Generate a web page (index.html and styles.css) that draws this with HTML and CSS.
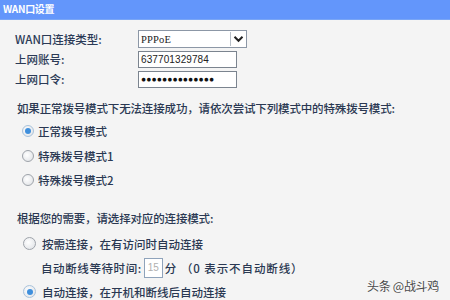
FILE: index.html
```html
<!DOCTYPE html>
<html>
<head>
<meta charset="utf-8">
<link rel="stylesheet" href="styles.css">
</head>
<body>
<div class="page">
  <div class="header">WAN口设置</div>
  <div class="form">
    <div class="row">
      <span class="label">WAN口连接类型:</span>
      <div class="select">
        <span class="select-value">PPPoE</span>
        <span class="select-btn">
          <svg width="11" height="8" viewBox="0 0 11 8"><path d="M1.5 1.8 L5.5 5.8 L9.5 1.8" fill="none" stroke="#222" stroke-width="2"/></svg>
        </span>
      </div>
    </div>
    <div class="row">
      <span class="label">上网账号:</span>
      <div class="input">637701329784</div>
    </div>
    <div class="row">
      <span class="label">上网口令:</span>
      <div class="input pwd">●●●●●●●●●●●●●●</div>
    </div>
  </div>

  <p class="note">如果正常拨号模式下无法连接成功，请依次尝试下列模式中的特殊拨号模式:</p>
  <div class="group one">
    <div class="opt"><span class="radio on"></span><span>正常拨号模式</span></div>
    <div class="opt"><span class="radio"></span><span>特殊拨号模式1</span></div>
    <div class="opt"><span class="radio"></span><span>特殊拨号模式2</span></div>
  </div>

  <p class="note second">根据您的需要，请选择对应的连接模式:</p>
  <div class="group two">
    <div class="opt"><span class="radio big"></span><span>按需连接，在有访问时自动连接</span></div>
    <div class="sub"><span>自动断线等待时间:</span><span class="small-input">15</span><span>分</span><span class="hint">（0 表示不自动断线）</span></div>
    <div class="opt"><span class="radio big on"></span><span>自动连接，在开机和断线后自动连接</span></div>
  </div>

  <div class="watermark">头条 @战斗鸡</div>
</div>
</body>
</html>
```

FILE: styles.css
```css
html, body {
  margin: 0;
  padding: 0;
}
body {
  width: 450px;
  height: 300px;
  overflow: hidden;
  background: #f4f4f4;
  font-family: "Noto Sans CJK SC", "Noto Sans", sans-serif;
  font-size: 11.5px;
  color: #2a3852;
}
.page {
  position: relative;
  width: 450px;
  height: 300px;
}
.header {
  height: 19px;
  line-height: 17px;
  background: #6396fb;
  border-bottom: 1px solid #7aa6f5;
  color: #ffffff;
  font-size: 10px;
  font-weight: bold;
  padding-left: 3px;
  letter-spacing: -0.3px;
}
.form {
  margin-top: 10px;
  padding-left: 15px;
  display: flex;
  flex-direction: column;
  gap: 2px;
}
.row {
  display: flex;
  align-items: center;
  height: 18px;
}
.label {
  width: 123px;
  font-weight: 500;
  color: #2b3a56;
}
.select {
  width: 107px;
  height: 16px;
  border: 1px solid #8c97a6;
  background: #fff;
  display: flex;
  align-items: center;
  justify-content: space-between;
}
.select-value, .input, .small-input {
  font-family: "Liberation Serif", "DejaVu Serif", serif;
  font-size: 10.5px;
  color: #222;
}
.select-value {
  padding-left: 2px;
  letter-spacing: 0.2px;
}
.select-btn {
  width: 14px;
  height: 14px;
  margin-right: 1px;
  border-left: 1px solid #b8bfc8;
  display: flex;
  align-items: center;
  justify-content: center;
}
.input {
  width: 95px;
  height: 15px;
  line-height: 15px;
  border: 1px solid #7b848f;
  background: #fff;
  padding-left: 2px;
  font-family: "Liberation Sans", sans-serif;
  font-size: 10px;
  letter-spacing: 0.1px;
  overflow: hidden;
  white-space: nowrap;
}
.input.pwd {
  font-size: 8.5px;
  letter-spacing: 0.1px;
  color: #111;
}
.note {
  margin: 12px 0 3px 17px;
  line-height: 16px;
  font-weight: 500;
  letter-spacing: -0.15px;
}
.note.second {
  margin-top: 17px;
  margin-bottom: 6px;
}
.group {
  display: flex;
  flex-direction: column;
}
.group.one {
  padding-left: 22px;
}
.group.one .opt {
  height: 24.5px;
}
.group.two {
  padding-left: 23px;
}
.opt {
  display: flex;
  align-items: center;
  height: 24px;
  font-weight: 500;
  letter-spacing: 0;
}
.radio {
  width: 10px;
  height: 10px;
  border-radius: 50%;
  border: 1px solid #9ea3aa;
  background: radial-gradient(circle at 40% 40%, #ffffff, #dcdfe3);
  margin-right: 4px;
  flex: none;
  position: relative;
}
.radio.big {
  width: 11px;
  height: 11px;
  margin-right: 6px;
}
.radio.on {
  border-color: #a9c3dc;
}
.radio.on::after {
  content: "";
  position: absolute;
  left: 2px;
  top: 2px;
  width: 6px;
  height: 6px;
  border-radius: 50%;
  background: #3f8fdc;
}
.radio.big.on::after {
  left: 2.5px;
  top: 2.5px;
}
.sub {
  display: flex;
  align-items: center;
  height: 24px;
  padding-left: 18px;
  font-weight: 500;
  letter-spacing: 0.6px;
}
.small-input {
  width: 17px;
  height: 18px;
  line-height: 18px;
  border: 1px solid #8fa3bb;
  background: #fff;
  color: #b0b0b0;
  text-align: center;
  margin: 0 2px 0 2px;
  font-family: "Liberation Sans", sans-serif;
  font-size: 10px;
  letter-spacing: 0;
}
.hint {
  margin-left: 4px;
  letter-spacing: 0.9px;
}
.watermark {
  position: absolute;
  right: 11px;
  bottom: 6px;
  font-size: 12px;
  color: #4a4a4a;
  letter-spacing: -0.3px;
  text-shadow: 0 0 2px #fff;
}
```
